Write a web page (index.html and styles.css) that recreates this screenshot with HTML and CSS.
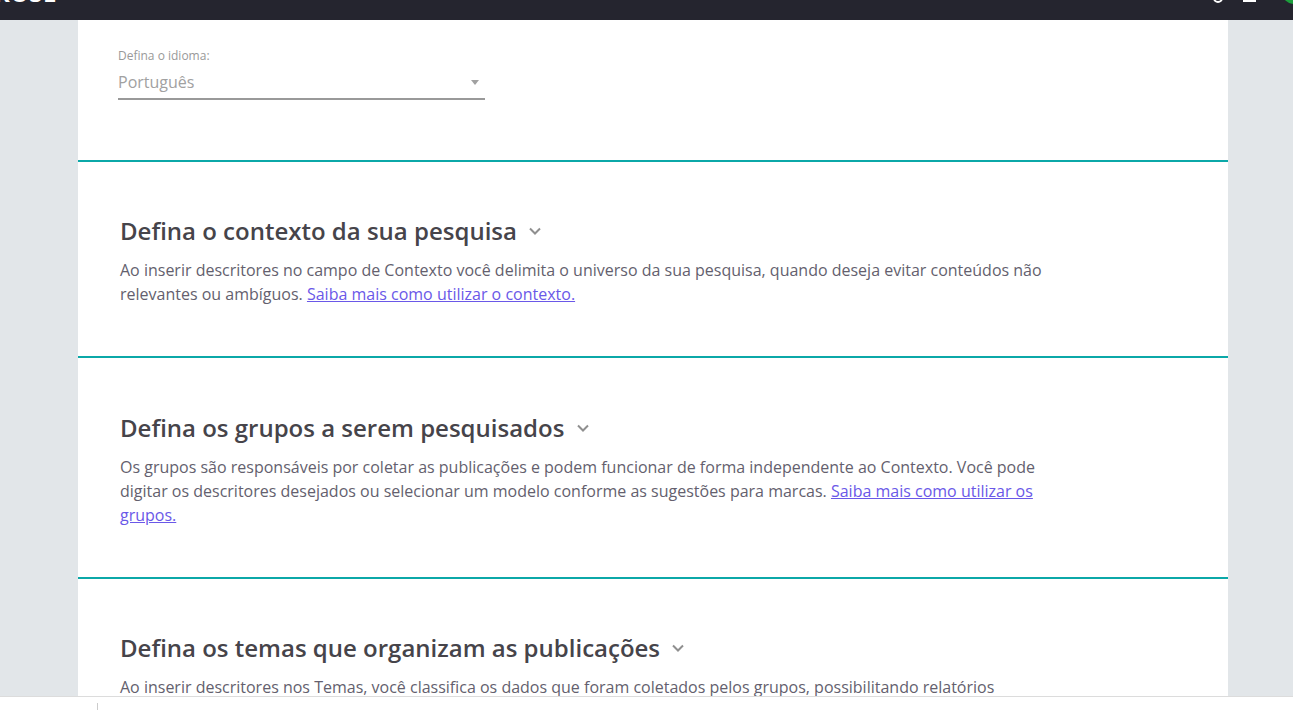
FILE: index.html
```html
<!DOCTYPE html>
<html lang="pt">
<head>
<meta charset="utf-8">
<title>Defina o idioma</title>
<link rel="stylesheet" href="styles.css">
</head>
<body>
<header class="topbar">
  <span class="logo">RUSE</span>
  <div class="top-icons">
    <svg class="ic-circle" width="14" height="14" viewBox="0 0 14 14"><circle cx="7" cy="-2" r="4" fill="none" stroke="#fff" stroke-width="2"/></svg>
    <span class="ic-bar"></span>
    <span class="status-dot"></span>
  </div>
</header>
<main class="page">
  <section class="lang">
    <label class="lang-label">Defina o idioma:</label>
    <div class="select"><span>Português</span><span class="caret"></span></div>
  </section>
  <section class="block">
    <h2>Defina o contexto da sua pesquisa <svg class="chev" width="14" height="9" viewBox="0 0 14 9"><path d="M2 1.5l5 5 5-5" fill="none" stroke="#8f8f8f" stroke-width="2"/></svg></h2>
    <p>Ao inserir descritores no campo de Contexto você delimita o universo da sua pesquisa, quando deseja evitar conteúdos não relevantes ou ambíguos. <a href="#">Saiba mais como utilizar o contexto.</a></p>
  </section>
  <section class="block">
    <h2>Defina os grupos a serem pesquisados <svg class="chev" width="14" height="9" viewBox="0 0 14 9"><path d="M2 1.5l5 5 5-5" fill="none" stroke="#8f8f8f" stroke-width="2"/></svg></h2>
    <p>Os grupos são responsáveis por coletar as publicações e podem funcionar de forma independente ao Contexto. Você pode digitar os descritores desejados ou selecionar um modelo conforme as sugestões para marcas. <a href="#">Saiba mais como utilizar os grupos.</a></p>
  </section>
  <section class="block">
    <h2>Defina os temas que organizam as publicações <svg class="chev" width="14" height="9" viewBox="0 0 14 9"><path d="M2 1.5l5 5 5-5" fill="none" stroke="#8f8f8f" stroke-width="2"/></svg></h2>
    <p>Ao inserir descritores nos Temas, você classifica os dados que foram coletados pelos grupos, possibilitando relatórios</p>
  </section>
</main>
<footer class="bottombar"><span class="divider"></span></footer>
</body>
</html>
```
FILE: styles.css
```css
* { box-sizing: border-box; }
html, body { margin: 0; height: 710px; overflow: hidden; }
body { background: #e2e6e9; font-family: "Open Sans", sans-serif; position: relative; }
.topbar { height: 20px; background: #25252f; display: flex; justify-content: space-between; overflow: hidden; position: relative; }
.logo { color: #fff; font-weight: 700; font-size: 24px; line-height: 20px; letter-spacing: 0.6px; margin-top: -17px; margin-left: -6px; height: 20px; }
.top-icons { display: flex; gap: 18px; align-items: flex-start; }
.ic-bar { width: 13px; height: 2px; background: #fff; margin-right: 8px; }
.status-dot { flex-shrink: 0; width: 24px; height: 24px; border-radius: 50%; background: #1c9f3c; margin-top: -20px; margin-right: -13px; }
.page { width: 1150px; margin-left: 78px; background: #fff; height: 690px; overflow: hidden; }
.lang { height: 140px; padding: 28px 0 0 40px; }
.lang-label { display: block; font-size: 12px; line-height: 16px; color: #999; }
.select { width: 367px; height: 34px; border-bottom: 2px solid #999; display: flex; justify-content: space-between; align-items: center; color: #a1a1a1; font-size: 16px; padding-right: 6px; margin-top: 2px; }
.caret { width: 0; height: 0; border-left: 4px solid transparent; border-right: 4px solid transparent; border-top: 5px solid #a1a1a1; }
.block { border-top: 2px solid #0ba8a8; padding: 53.3px 0 50.1px 42px; }
.block h2 { margin: 0 0 11px; font-size: 24px; line-height: 32px; font-weight: 600; color: #46444a; }
.chev { margin-left: 5px; vertical-align: 4px; }
.block p { margin: 0; width: 940px; font-size: 16px; line-height: 24px; color: #645f6e; }
.block a { color: #6a58e8; text-decoration: underline; }
.bottombar { position: absolute; left: 0; right: 0; bottom: 0; height: 14px; background: #fff; border-top: 1px solid #dcdcdc; }
.divider { position: absolute; left: 97px; top: 6px; width: 1px; height: 8px; background: #ccc; }
```
